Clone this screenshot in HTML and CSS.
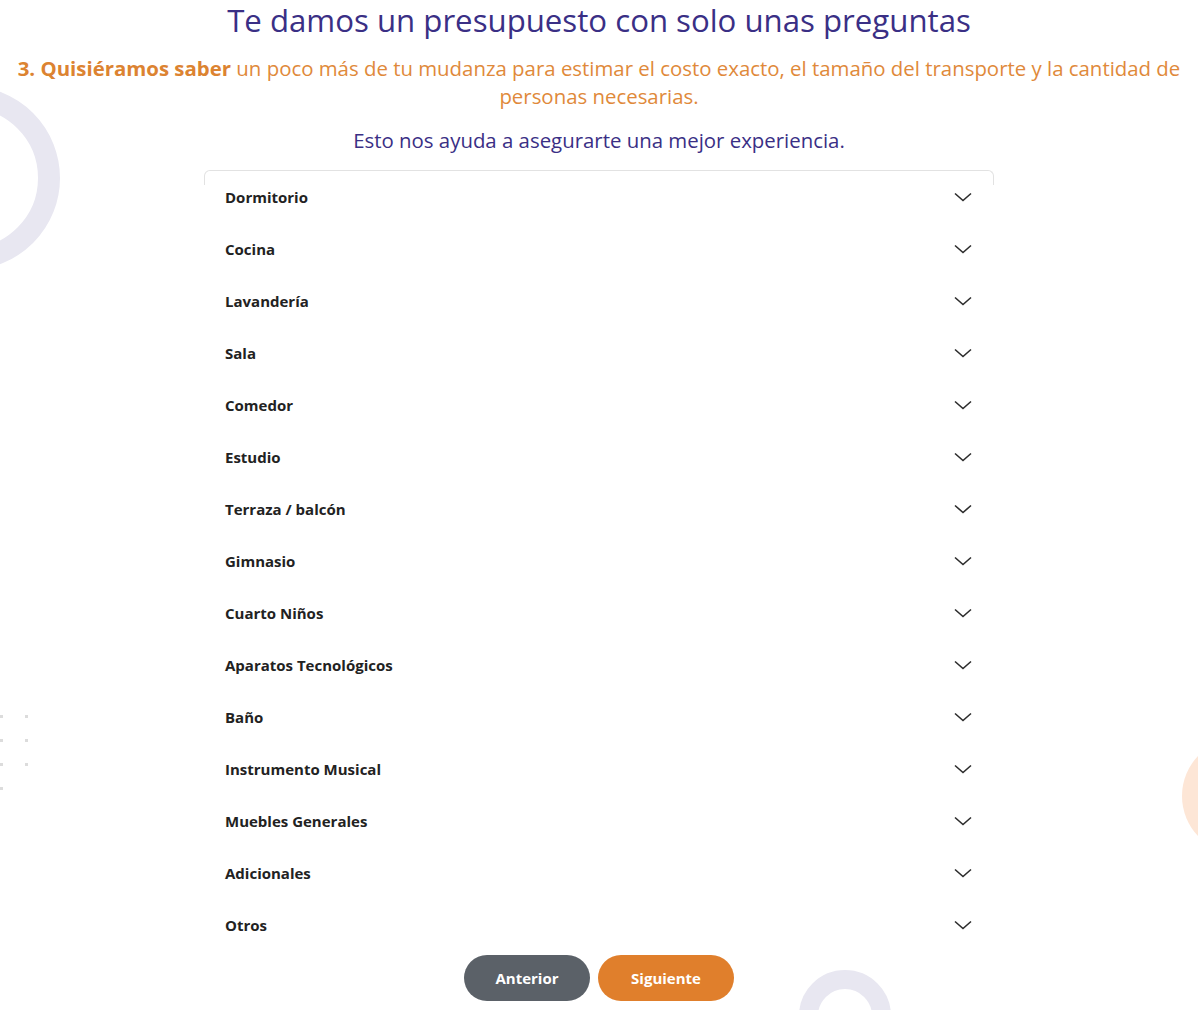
FILE: index.html
```html
<!DOCTYPE html>
<html lang="es">
<head>
<meta charset="utf-8">
<title>Presupuesto</title>
<link rel="stylesheet" href="styles.css">
</head>
<body>
<div class="stage">
<div class="deco ring-left"></div>
<div class="deco dots">
  <span></span><span></span><span></span><span></span><span></span><span></span><span></span>
</div>
<div class="deco peach"></div>
<div class="deco ring-bottom"></div>

<main class="page">
  <h1 class="title">Te damos un presupuesto con solo unas preguntas</h1>
  <p class="lead"><strong>3. Quisiéramos saber</strong> un poco más de tu mudanza para estimar el costo exacto, el tamaño del transporte y la cantidad de personas necesarias.</p>
  <p class="note">Esto nos ayuda a asegurarte una mejor experiencia.</p>

  <section class="card">
    <div class="row"><span>Dormitorio</span><svg class="chev" viewBox="0 0 18 10"><path d="M1 1.5 L9 8.5 L17 1.5"/></svg></div>
    <div class="row"><span>Cocina</span><svg class="chev" viewBox="0 0 18 10"><path d="M1 1.5 L9 8.5 L17 1.5"/></svg></div>
    <div class="row"><span>Lavandería</span><svg class="chev" viewBox="0 0 18 10"><path d="M1 1.5 L9 8.5 L17 1.5"/></svg></div>
    <div class="row"><span>Sala</span><svg class="chev" viewBox="0 0 18 10"><path d="M1 1.5 L9 8.5 L17 1.5"/></svg></div>
    <div class="row"><span>Comedor</span><svg class="chev" viewBox="0 0 18 10"><path d="M1 1.5 L9 8.5 L17 1.5"/></svg></div>
    <div class="row"><span>Estudio</span><svg class="chev" viewBox="0 0 18 10"><path d="M1 1.5 L9 8.5 L17 1.5"/></svg></div>
    <div class="row"><span>Terraza / balcón</span><svg class="chev" viewBox="0 0 18 10"><path d="M1 1.5 L9 8.5 L17 1.5"/></svg></div>
    <div class="row"><span>Gimnasio</span><svg class="chev" viewBox="0 0 18 10"><path d="M1 1.5 L9 8.5 L17 1.5"/></svg></div>
    <div class="row"><span>Cuarto Niños</span><svg class="chev" viewBox="0 0 18 10"><path d="M1 1.5 L9 8.5 L17 1.5"/></svg></div>
    <div class="row"><span>Aparatos Tecnológicos</span><svg class="chev" viewBox="0 0 18 10"><path d="M1 1.5 L9 8.5 L17 1.5"/></svg></div>
    <div class="row"><span>Baño</span><svg class="chev" viewBox="0 0 18 10"><path d="M1 1.5 L9 8.5 L17 1.5"/></svg></div>
    <div class="row"><span>Instrumento Musical</span><svg class="chev" viewBox="0 0 18 10"><path d="M1 1.5 L9 8.5 L17 1.5"/></svg></div>
    <div class="row"><span>Muebles Generales</span><svg class="chev" viewBox="0 0 18 10"><path d="M1 1.5 L9 8.5 L17 1.5"/></svg></div>
    <div class="row"><span>Adicionales</span><svg class="chev" viewBox="0 0 18 10"><path d="M1 1.5 L9 8.5 L17 1.5"/></svg></div>
    <div class="row"><span>Otros</span><svg class="chev" viewBox="0 0 18 10"><path d="M1 1.5 L9 8.5 L17 1.5"/></svg></div>
  </section>

  <div class="actions">
    <button class="btn btn-prev">Anterior</button>
    <button class="btn btn-next">Siguiente</button>
  </div>
</main>
</div>
</body>
</html>
```
FILE: styles.css
```css
html, body {
  margin: 0;
  padding: 0;
  background: #ffffff;
}
body {
  font-family: "Open Sans", "Lato", sans-serif;
}
.stage {
  position: relative;
  width: 1198px;
  height: 1010px;
  overflow: hidden;
}
.page {
  position: relative;
  z-index: 1;
  display: flex;
  flex-direction: column;
  align-items: center;
  padding: 0 8px;
}
.title {
  margin: 2px 0 0;
  font-size: 31.2px;
  line-height: 36px;
  font-weight: 400;
  color: #3a2f85;
}
.lead {
  margin: 16px 0 0;
  font-size: 20.4px;
  line-height: 28px;
  color: #e0893a;
  text-align: center;
  font-weight: 400;
}
.lead strong {
  font-weight: 700;
  color: #dc8331;
}
.note {
  margin: 16px 0 0;
  font-size: 20.4px;
  line-height: 28px;
  color: #3a2f85;
}
.card {
  position: relative;
  margin-top: 16px;
  width: 790px;
  box-sizing: border-box;
}
.card::before {
  content: "";
  position: absolute;
  left: 0;
  right: 0;
  top: 0;
  height: 14px;
  border: 1px solid #e2e2e2;
  border-bottom: none;
  border-radius: 6px 6px 0 0;
}
.row {
  height: 52px;
  display: flex;
  align-items: center;
  justify-content: space-between;
  padding: 0 22px 0 21px;
  font-size: 15px;
  font-weight: 700;
  color: #222222;
}
.row:first-child {
  margin-top: 1px;
}
.chev {
  width: 18px;
  height: 10px;
  fill: none;
  stroke: #2c2c2c;
  stroke-width: 1.6;
}
.actions {
  display: flex;
  gap: 8px;
  margin-top: 4px;
}
.btn {
  height: 46px;
  border: none;
  border-radius: 23px;
  color: #ffffff;
  font-family: "Open Sans", sans-serif;
  font-weight: 700;
  font-size: 15px;
}
.btn-prev {
  width: 126px;
  background: #5b6168;
}
.btn-next {
  width: 136px;
  background: #e07f2c;
}
.deco {
  position: absolute;
  z-index: 0;
}
.ring-left {
  left: -124px;
  top: 86px;
  width: 140px;
  height: 140px;
  border: 22px solid #e8e7f1;
  border-radius: 50%;
}
.dots {
  left: 0;
  top: 715px;
  width: 30px;
  display: grid;
  grid-template-columns: 3px 3px;
  column-gap: 22px;
  row-gap: 21px;
}
.dots span {
  width: 3px;
  height: 3px;
  background: #dcdcdc;
}
.peach {
  left: 1182px;
  top: 738px;
  width: 116px;
  height: 116px;
  border-radius: 50%;
  background: #fde6d6;
}
.ring-bottom {
  left: 799px;
  top: 970px;
  width: 54px;
  height: 54px;
  border: 19px solid #e8e7f1;
  border-radius: 50%;
}
```
